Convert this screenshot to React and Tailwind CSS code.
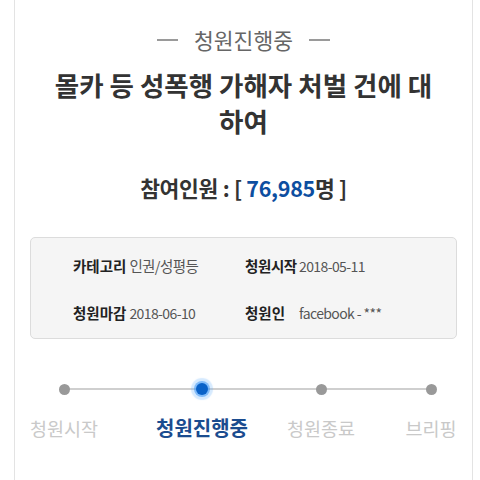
import React from "react";

const font = { fontFamily: '"Noto Sans CJK KR", "Noto Sans", sans-serif' };

function Step({ label, active, ml }) {
  return (
    <div className={`flex w-[70px] flex-none flex-col items-center ${ml}`}>
      <div className="flex h-[22px] items-center justify-center">
        {active ? (
          <div className="h-[12px] w-[12px] rounded-full bg-[#0a62c8] shadow-[0_0_0_2px_rgba(60,150,245,0.55),0_0_1px_5px_rgba(90,170,250,0.25)]" />
        ) : (
          <div className="h-[11px] w-[11px] rounded-full bg-[#999999]" />
        )}
      </div>
      <div
        className={`mt-[15px] whitespace-nowrap leading-[26px] ${
          active ? "text-[20px] font-bold text-[#1b4c8f]" : "text-[18.5px] text-[#c9c9c9]"
        }`}
      >
        {label}
      </div>
    </div>
  );
}

export default function App() {
  return (
    <div className="min-h-[480px] w-[480px] overflow-hidden bg-white" style={font}>
      <div className="ml-[14px] mr-[7px] min-h-[480px] border-x border-[#e3e3e3] bg-white">
        <div className="flex items-center justify-center gap-[16px] pt-[26px] text-[21.5px] leading-[28px] text-[#666666]">
          <span className="h-[1.5px] w-[21px] bg-[#9a9a9a]" />
          <span>청원진행중</span>
          <span className="h-[1.5px] w-[21px] bg-[#9a9a9a]" />
        </div>
        <h1 className="mt-[13px] text-center text-[26.5px] font-bold leading-[36px] text-[#333333]">
          몰카 등 성폭행 가해자 처벌 건에 대
          <br />
          하여
        </h1>
        <div className="mt-[34px] text-center text-[21.5px] font-bold leading-[30px] tracking-[-0.3px] text-[#333333]">
          참여인원 : [ <span className="text-[#0d4ea0]">76,985</span>명 ]
        </div>
        <div className="mx-[15px] mt-[34px] rounded-[5px] border border-[#dcdcdc] bg-[#f5f5f5] pb-[15px] pl-[42px] pt-[18px] text-[14px] leading-[20px] tracking-[-0.6px] text-[#555555]">
          <div className="grid grid-cols-[172px_1fr] gap-y-[27px] whitespace-nowrap">
            <div className="flex gap-[3px]">
              <span className="text-[14.5px] font-bold tracking-normal text-[#222222]">카테고리</span>
              <span className="text-[14.5px]">인권/성평등</span>
            </div>
            <div className="flex">
              <span className="w-[54px] flex-none text-[14.5px] font-bold tracking-[-0.4px] text-[#222222]">청원시작</span>
              <span>2018-05-11</span>
            </div>
            <div className="flex gap-[3px]">
              <span className="text-[14.5px] font-bold tracking-normal text-[#222222]">청원마감</span>
              <span>2018-06-10</span>
            </div>
            <div className="flex">
              <span className="w-[54px] flex-none text-[14.5px] font-bold tracking-normal text-[#222222]">청원인</span>
              <span>facebook - ***</span>
            </div>
          </div>
        </div>
        <div className="relative mt-[39px] flex">
          <div className="absolute left-[49px] top-[10px] h-[1.5px] w-[367px] bg-[#cfcfcf]" />
          <div className="relative flex">
            <Step label="청원시작" ml="ml-[14px]" />
            <Step label="청원진행중" active ml="ml-[68px]" />
            <Step label="청원종료" ml="ml-[49px]" />
            <Step label="브리핑" ml="ml-[40px]" />
          </div>
        </div>
      </div>
    </div>
  );
}
